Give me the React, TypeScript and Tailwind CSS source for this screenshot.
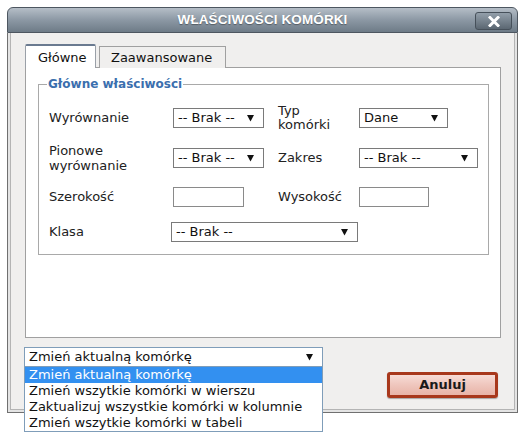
import React from 'react';

const FONT = { fontFamily: '"DejaVu Sans", Verdana, sans-serif' };

function Arrow() {
    return (
        <svg width="7" height="8" viewBox="0 0 7 8" className="shrink-0">
            <polygon points="0,1 7,1 3.5,7.5" fill="#111" />
        </svg>
    );
}

function Select({ value, className = '', border = 'border-[#7a7a7a]' }: { value: string; className?: string; border?: string }) {
    return (
        <div className={`h-[20px] flex items-center justify-between bg-white border ${border} pl-[4px] pr-[9px] text-[13px] text-[#111] ${className}`}>
            <span className="whitespace-nowrap">{value}</span>
            <Arrow />
        </div>
    );
}

function TextBox({ className = '' }: { className?: string }) {
    return <div className={`h-[20px] bg-white border border-[#8a8a8a] ${className}`} />;
}

const options = [
    'Zmień aktualną komórkę',
    'Zmień wszytkie komórki w wierszu',
    'Zaktualizuj wszystkie komórki w kolumnie',
    'Zmień wszytkie komórki w tabeli',
];

export default function App() {
    return (
        <div className="w-[522px] h-[438px] bg-white overflow-hidden" style={FONT}>
            <div className="ml-[7px] pt-[7px] w-[511px]">
                {/* Title bar */}
                <div className="relative h-[26px] rounded-t-[6px] border border-[#4d5660] bg-gradient-to-b from-[#b5bec7] via-[#8c98a4] to-[#6e7b87] flex items-center justify-center">
                    <span
                        className="text-white font-bold text-[13.5px] tracking-[0.1px] [text-shadow:0_1px_1px_rgba(0,0,0,0.35)]"
                        style={{ fontFamily: '"Liberation Sans", Arial, sans-serif' }}
                    >
                        WŁAŚCIWOŚCI KOMÓRKI
                    </span>
                    <div className="absolute right-[5px] top-[4px] w-[37px] h-[18px] rounded-[3px] border border-[#46505a] bg-gradient-to-b from-[#939faa] to-[#5b6772] flex items-center justify-center">
                        <svg width="12" height="11" viewBox="0 0 12 11">
                            <path d="M2 1.5 L10 9.5 M10 1.5 L2 9.5" stroke="white" strokeWidth="3" strokeLinecap="square" />
                        </svg>
                    </div>
                </div>

                {/* Body */}
                <div className="border-x border-b border-[#707070] bg-[#e4e4e4] px-[2px] pb-[2px]">
                    <div className="border-x border-b border-[#b4b4b4] bg-[#f0efee] pl-[14px] pr-[13px] pt-[11px] pb-[11px]">
                        {/* Tabs */}
                        <div className="flex items-end h-[24px] gap-[3px] relative z-10">
                            <div className="h-[24px] w-[71px] bg-white border border-[#9aa0a8] border-t-[2px] border-t-[#6a7a90] border-b-0 rounded-t-[2px] pl-[12px] pt-[2px] text-[13px] text-[#111]">
                                Główne
                            </div>
                            <div className="h-[22px] w-[127px] bg-[#f0efee] border border-[#a0a0a0] border-b-0 pl-[11px] pt-[1px] text-[13px] text-[#111]">
                                Zaawansowane
                            </div>
                        </div>

                        {/* Tab panel */}
                        <div className="-mt-px h-[271px] bg-white border border-[#a0a0a0] pl-[12px] pr-[13px] pt-[7px]">
                            <fieldset className="border border-[#a9a9a9] px-[10px] pb-[12px]">
                                <legend className="-ml-[2px] px-[1px] text-[12px] font-bold text-[#3b6fae]">Główne właściwości</legend>
                                <div className="flex items-center h-[20px] mt-[15px] text-[13px] text-[#222]">
                                    <span className="w-[124px]">Wyrównanie</span>
                                    <Select value="-- Brak --" className="w-[91px]" />
                                    <span className="ml-[14px] w-[81px] leading-[14px]">Typ<br />komórki</span>
                                    <Select value="Dane" className="w-[89px]" />
                                </div>
                                <div className="flex items-center h-[20px] mt-[20px] text-[13px] text-[#222]">
                                    <span className="w-[124px] leading-[15px]">Pionowe<br />wyrównanie</span>
                                    <Select value="-- Brak --" className="w-[91px]" />
                                    <span className="ml-[14px] w-[81px]">Zakres</span>
                                    <Select value="-- Brak --" className="w-[119px]" />
                                </div>
                                <div className="flex items-center h-[20px] mt-[19px] text-[13px] text-[#222]">
                                    <span className="w-[124px]">Szerokość</span>
                                    <TextBox className="w-[71px]" />
                                    <span className="ml-[34px] w-[81px]">Wysokość</span>
                                    <TextBox className="w-[70px]" />
                                </div>
                                <div className="flex items-center h-[20px] mt-[15px] text-[13px] text-[#222]">
                                    <span className="w-[122px]">Klasa</span>
                                    <Select value="-- Brak --" className="w-[187px]" />
                                </div>
                            </fieldset>
                        </div>

                        {/* Bottom controls */}
                        <div className="relative mt-[9px] -ml-[1px]">
                            <Select value="Zmień aktualną komórkę" className="w-[299px]" border="border-[#7f9db9]" />
                            <div className="absolute left-0 top-[20px] w-[299px] bg-white border border-[#7f9db9] border-t-0 z-20 text-[13px]">
                                {options.map((o, i) => (
                                    <div
                                        key={o}
                                        className={`h-[16px] leading-[16px] pl-[4px] whitespace-nowrap ${i === 0 ? 'bg-[#3390f0] text-white' : 'text-[#111]'}`}
                                    >
                                        {o}
                                    </div>
                                ))}
                            </div>
                        </div>
                        <div className="flex justify-end mt-[5px] pr-[3px]">
                            <div className="w-[111px] h-[26px] rounded-[3px] border-[3px] border-[#a8381c] bg-gradient-to-b from-[#f7dcd6] via-[#efc6bd] to-[#e8b4a8] flex items-center justify-center text-[13px] font-bold text-[#1a1a1a] shadow-[0_1px_1px_rgba(0,0,0,0.3)]">
                                Anuluj
                            </div>
                        </div>
                    </div>
                </div>
            </div>
        </div>
    );
}
